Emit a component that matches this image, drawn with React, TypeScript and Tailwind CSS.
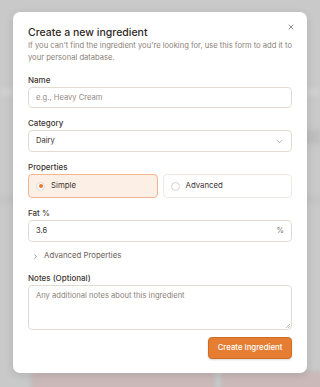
import { ChevronDown, ChevronRight, X } from 'lucide-react'

// Create ingredient dialog over a dimmed page — orange #E8792E, warm greys

const font = { fontFamily: 'Inter, "Noto Sans", sans-serif' }

function Label({ children }: { children: React.ReactNode }) {
  return <p className="text-[8px] leading-[12px] font-medium text-[#3d3532] mb-[1px]">{children}</p>
}

export default function App() {
  return (
    <div className="relative w-[320px] h-[387px] overflow-hidden bg-[#c9c9c9]" style={font}>
      {/* blurred page behind the overlay */}
      <div className="absolute inset-0 blur-[2px]">
        <div className="absolute left-0 right-0 top-[88px] h-[8px] bg-[#cfcfcf]" />
        <div className="absolute left-0 right-0 top-[196px] h-[6px] bg-[#c2c2c2]" />
        <div className="absolute right-0 top-[130px] w-[20px] h-[14px] bg-[#bdbdbd]" />
        <div className="absolute left-[32px] top-[372px] w-[182px] h-[30px] bg-[#cbb9b9] border border-[#bfa9a9] rounded-[3px]" />
        <div className="absolute left-[222px] top-[372px] w-[100px] h-[30px] bg-[#cbb9b9] border border-[#bfa9a9] rounded-[3px]" />
      </div>

      <div className="relative pt-[12px] px-[13px]">
        <div className="relative bg-white rounded-[7px] px-[15px] pt-[14px] pb-[14px] shadow-[0_2px_8px_rgba(0,0,0,0.12)]">
          <X className="absolute right-[12px] top-[11px] w-[8px] h-[8px] text-[#5a5250]" strokeWidth={2} />

          <h2 className="text-[10.5px] leading-[14px] font-medium text-[#2f2a28]">Create a new ingredient</h2>
          <p className="text-[7.6px] leading-[12px] text-[#8c7f79]">
            If you can't find the ingredient you're looking for, use this form to add it to your personal database.
          </p>

          <div className="mt-[10px]">
            <Label>Name</Label>
            <div className="mt-[1px] h-[21px] rounded-[4px] border border-[#e3dad4] flex items-center px-[7px] text-[7.6px] text-[#968a85]">
              e.g., Heavy Cream
            </div>
          </div>

          <div className="mt-[9px]">
            <Label>Category</Label>
            <div className="h-[22px] rounded-[4px] border border-[#e3dad4] flex items-center justify-between px-[7px] text-[7.6px] text-[#3d3532]">
              <span>Dairy</span>
              <ChevronDown className="w-[9px] h-[9px] text-[#8c7f79]" strokeWidth={1.6} />
            </div>
          </div>

          <div className="mt-[9px]">
            <Label>Properties</Label>
            <div className="grid grid-cols-2 gap-[5px]">
              <div className="h-[24px] rounded-[4px] border border-[#f1b48b] bg-[#fcefe5] flex items-center gap-[6px] px-[7px]">
                <span className="w-[9px] h-[9px] rounded-full border border-[#e2d6cf] bg-white flex items-center justify-center">
                  <span className="w-[4px] h-[4px] rounded-full bg-[#e8792e]" />
                </span>
                <span className="text-[7.8px] text-[#3d3532]">Simple</span>
              </div>
              <div className="h-[24px] rounded-[4px] border border-[#efe9e5] bg-white flex items-center gap-[6px] px-[7px]">
                <span className="w-[9px] h-[9px] rounded-full border border-[#d9d0cb] bg-white" />
                <span className="text-[7.8px] text-[#3d3532]">Advanced</span>
              </div>
            </div>
          </div>

          <div className="mt-[9px]">
            <Label>Fat %</Label>
            <div className="h-[22px] rounded-[4px] border border-[#e3dad4] flex items-center justify-between px-[7px] text-[7.6px] text-[#3d3532]">
              <span>3.6</span>
              <span className="text-[#7d716c]">%</span>
            </div>
          </div>

          <div className="mt-[7px] h-[14px] flex items-center gap-[5px] pl-[4px] text-[7.8px] text-[#6b605b]">
            <ChevronRight className="w-[7px] h-[7px] text-[#5a5250]" strokeWidth={2} />
            <span>Advanced Properties</span>
          </div>

          <div className="mt-[9px]">
            <Label>Notes (Optional)</Label>
            <div className="relative h-[45px] rounded-[4px] border border-[#e3dad4] px-[7px] pt-[5px] text-[7.6px] leading-[10px] text-[#8c7f79]">
              Any additional notes about this ingredient
              <svg className="absolute right-[1px] bottom-[1px] w-[5px] h-[5px]" viewBox="0 0 5 5">
                <path d="M1 5 L5 1 M3 5 L5 3" stroke="#9d918c" strokeWidth="0.6" />
              </svg>
            </div>
          </div>

          <div className="mt-[7px] flex justify-end">
            <button className="h-[22px] w-[84px] rounded-[4px] bg-[#e57e32] border border-[#d06c22] text-white text-[7.8px] font-medium shadow-[0_1px_2px_rgba(0,0,0,0.15)]">
              Create Ingredient
            </button>
          </div>
        </div>
      </div>
    </div>
  )
}
